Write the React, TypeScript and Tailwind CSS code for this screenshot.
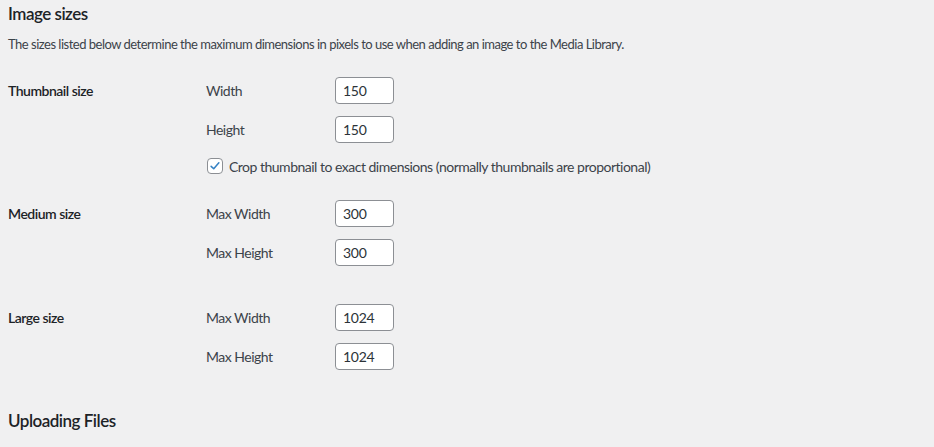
import React from "react"

const font = { fontFamily: 'Lato, "Open Sans", sans-serif' }

const SizeInput = ({ value }: { value: string }) => (
  <input
    type="text"
    defaultValue={value}
    className="w-[59px] h-[27px] px-[7px] rounded-[4px] border border-[#8c8f94] bg-white text-[14px] tracking-[-0.3px] text-[#2c3338] outline-none"
  />
)

const Field = ({ label, value }: { label: string; value: string }) => (
  <div className="flex items-center h-[27px]">
    <label className="w-[129px] text-[14px] tracking-[-0.5px] text-[#3c434a]">{label}</label>
    <SizeInput value={value} />
  </div>
)

const Row = ({ title, children, className }: { title: string; children: React.ReactNode; className?: string }) => (
  <div className={`flex ${className ?? ""}`}>
    <div className="w-[198px] h-[27px] flex items-center text-[14px] tracking-[-0.5px] font-semibold text-[#1d2327]">{title}</div>
    <div className="flex flex-col gap-[12px]">{children}</div>
  </div>
)

export default function App() {
  return (
    <div style={font} className="min-h-[447px] w-full bg-[#f0f0f1] pl-[8px] text-[#3c434a] overflow-hidden">
      <h2 className="pt-[3px] text-[17px] font-semibold tracking-[-0.5px] text-[#1d2327] leading-[21px]">Image sizes</h2>
      <p className="mt-[11px] text-[13px] tracking-[-0.5px] leading-[18px]">
        The sizes listed below determine the maximum dimensions in pixels to use when adding an image to the Media Library.
      </p>

      <Row title="Thumbnail size" className="mt-[24px]">
        <Field label="Width" value="150" />
        <Field label="Height" value="150" />
        <label className="flex items-center h-[16px] mt-[3px] text-[14px] tracking-[-0.5px]">
          <span className="w-[16px] h-[16px] ml-[1px] mr-[6px] rounded-[4px] border border-[#8c8f94] bg-white flex items-center justify-center">
            <svg viewBox="0 0 20 20" className="w-[16px] h-[16px]">
              <path d="M4.5 10.5 L8.2 14 L15.5 5.5" fill="none" stroke="#3582c4" strokeWidth="2.2" strokeLinecap="round" strokeLinejoin="round" />
            </svg>
          </span>
          Crop thumbnail to exact dimensions (normally thumbnails are proportional)
        </label>
      </Row>

      <Row title="Medium size" className="mt-[26px]">
        <Field label="Max Width" value="300" />
        <Field label="Max Height" value="300" />
      </Row>

      <Row title="Large size" className="mt-[38px]">
        <Field label="Max Width" value="1024" />
        <Field label="Max Height" value="1024" />
      </Row>

      <h2 className="mt-[40px] text-[17px] font-semibold tracking-[-0.5px] text-[#1d2327] leading-[21px]">Uploading Files</h2>
    </div>
  )
}
